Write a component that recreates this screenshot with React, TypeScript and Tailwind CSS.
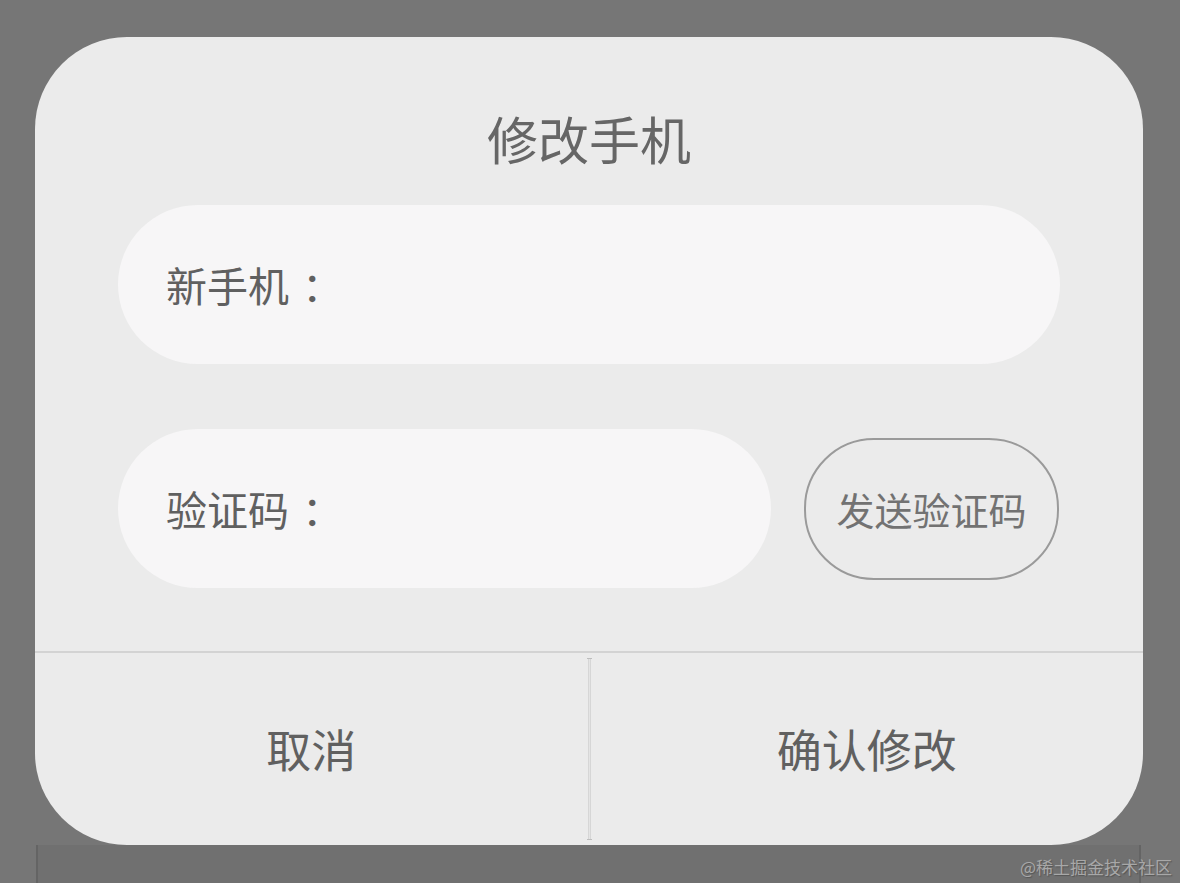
import React from 'react';

const font = { fontFamily: '"Noto Sans CJK SC", "Noto Sans", sans-serif' };

export default function App() {
  return (
    <div className="relative flex h-screen w-full flex-col bg-[#767676] pt-[37px] pl-[35px] pr-[37px]" style={font}>
      {/* Dialog */}
      <div className="flex h-[808px] w-full flex-col overflow-hidden rounded-[92px] bg-[#ebebeb]">
        <div className="px-[83px]">
          <h1 className="mt-[71px] h-[60px] text-center text-[51px] leading-[60px] font-normal text-[#666666]">修改手机</h1>

          <div className="mt-[37px] flex h-[159px] items-center rounded-full bg-[#f7f6f7] pl-[48px]">
            <span className="text-[41px] leading-none text-[#606060]">新手机<span className="ml-[13px]">：</span></span>
          </div>

          <div className="mt-[65px] flex items-center gap-[33px]">
            <div className="flex h-[159px] w-[653px] items-center rounded-full bg-[#f7f6f7] pl-[48px]">
              <span className="text-[41px] leading-none text-[#606060]">验证码<span className="ml-[13px]">：</span></span>
            </div>
            <button className="flex h-[142px] w-[255px] items-center justify-center rounded-[70px] border-2 border-[#9a9a9a] text-[38px] text-[#727272]">
              发送验证码
            </button>
          </div>
        </div>

        <div className="mt-[63px] h-[2px] w-full bg-[#d3d3d3]" />

        <div className="flex flex-1">
          <button className="flex flex-1 items-center justify-center text-[45px] text-[#606060]">取消</button>
          <div className="flex w-[3px] flex-col items-center py-[2px]">
            <div className="h-[4px] w-[5px] border-b border-[#bdbdbd]" />
            <div className="w-[3px] flex-1 border-x border-[#d6d6d6] bg-[#e4e4e4]" />
            <div className="h-[4px] w-[5px] border-t border-[#bdbdbd]" />
          </div>
          <button className="flex flex-1 items-center justify-center text-[45px] text-[#606060]">确认修改</button>
        </div>
      </div>

      {/* page behind */}
      <div className="ml-[1px] mr-[2px] flex-1 border-x-2 border-[#646464] bg-[#707070]" />

      {/* watermark */}
      <div className="absolute right-[8px] bottom-[8px] text-[17px] leading-none text-[#a8a8a8] [text-shadow:1px_1px_1px_#555]">
        @稀土掘金技术社区
      </div>
    </div>
  );
}
